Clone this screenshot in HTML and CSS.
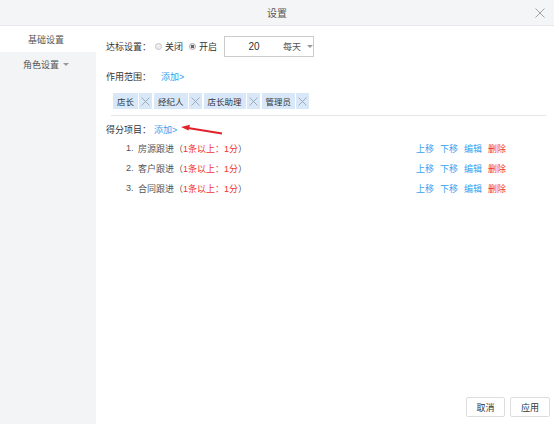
FILE: index.html
```html
<!DOCTYPE html>
<html>
<head>
<meta charset="utf-8">
<link rel="stylesheet" href="styles.css">
</head>
<body>
<div class="dialog">
  <div class="header">
    <span class="title">设置</span>
    <svg class="close" width="10" height="10" viewBox="0 0 10 10"><path d="M0.5 0.5L9.5 9.5M9.5 0.5L0.5 9.5" stroke="#9a9a9a" stroke-width="0.9" fill="none"/></svg>
  </div>
  <div class="main">
    <div class="sidebar">
      <div class="nav-item active">基础设置</div>
      <div class="nav-item">角色设置 <span class="caret"></span></div>
    </div>
    <div class="content">
      <div class="row row-target">
        <span class="label">达标设置：</span>
        <span class="radio"></span><span class="radio-text">关闭</span>
        <span class="radio checked"></span><span class="radio-text">开启</span>
        <div class="combo">
          <span class="combo-num">20</span>
          <span class="combo-sel">每天</span>
          <span class="caret"></span>
        </div>
      </div>
      <div class="row row-scope">
        <span class="label">作用范围：</span>
        <a class="link">添加&gt;</a>
      </div>
      <div class="tags">
        <span class="tag">店长</span><span class="tag-x"><svg width="9" height="9" viewBox="0 0 9 9"><path d="M0.5 0.5L8.5 8.5M8.5 0.5L0.5 8.5" stroke="#8f9aa8" stroke-width="0.8" fill="none"/></svg></span>
        <span class="tag">经纪人</span><span class="tag-x"><svg width="9" height="9" viewBox="0 0 9 9"><path d="M0.5 0.5L8.5 8.5M8.5 0.5L0.5 8.5" stroke="#8f9aa8" stroke-width="0.8" fill="none"/></svg></span>
        <span class="tag">店长助理</span><span class="tag-x"><svg width="9" height="9" viewBox="0 0 9 9"><path d="M0.5 0.5L8.5 8.5M8.5 0.5L0.5 8.5" stroke="#8f9aa8" stroke-width="0.8" fill="none"/></svg></span>
        <span class="tag">管理员</span><span class="tag-x"><svg width="9" height="9" viewBox="0 0 9 9"><path d="M0.5 0.5L8.5 8.5M8.5 0.5L0.5 8.5" stroke="#8f9aa8" stroke-width="0.8" fill="none"/></svg></span>
      </div>
      <div class="divider"></div>
      <div class="row row-score">
        <span class="label">得分项目：</span>
        <a class="link">添加&gt;</a>
        <svg class="arrow" width="44" height="12" viewBox="0 0 44 12"><path d="M42 9.5L8 4" stroke="#e0222a" stroke-width="2" fill="none"/><path d="M1 3L10 0.8L8.6 6.6Z" fill="#e0222a"/></svg>
      </div>
      <ul class="items">
        <li class="item">
          <span class="idx">1.</span>
          <span class="name">房源跟进（<em>1条以上：1分</em>）</span>
          <span class="actions"><a class="link">上移</a><a class="link">下移</a><a class="link">编辑</a><a class="del">删除</a></span>
        </li>
        <li class="item">
          <span class="idx">2.</span>
          <span class="name">客户跟进（<em>1条以上：1分</em>）</span>
          <span class="actions"><a class="link">上移</a><a class="link">下移</a><a class="link">编辑</a><a class="del">删除</a></span>
        </li>
        <li class="item">
          <span class="idx">3.</span>
          <span class="name">合同跟进（<em>1条以上：1分</em>）</span>
          <span class="actions"><a class="link">上移</a><a class="link">下移</a><a class="link">编辑</a><a class="del">删除</a></span>
        </li>
      </ul>
      <div class="footer">
        <button class="btn">取消</button>
        <button class="btn">应用</button>
      </div>
    </div>
  </div>
</div>
</body>
</html>
```
FILE: styles.css
```css
* { box-sizing: border-box; }
html, body { margin: 0; padding: 0; }
body {
  width: 554px;
  height: 424px;
  background: #fff;
  font-family: "Liberation Sans", "Noto Sans CJK SC", sans-serif;
  font-size: 9px;
  color: #333;
  overflow: hidden;
}
.dialog { display: flex; flex-direction: column; height: 424px; }
.header {
  height: 26px;
  background: #f4f5f7;
  border-bottom: 1px solid #e6e8eb;
  display: flex;
  align-items: center;
  justify-content: center;
  position: relative;
  flex: none;
}
.title { font-size: 10px; color: #555; }
.close { position: absolute; right: 9px; top: 8px; }
.main { flex: 1; display: flex; }
.sidebar { width: 96px; background: #f3f4f6; flex: none; }
.nav-item {
  height: 26px;
  display: flex;
  align-items: center;
  justify-content: center;
  color: #555;
  padding-right: 4px;
}
.nav-item.active { background: #fff; margin-bottom: -1px; }
.nav-item .caret { margin-left: 4px; margin-top: 1px; }
.caret {
  display: inline-block;
  width: 0; height: 0;
  border-left: 3px solid transparent;
  border-right: 3px solid transparent;
  border-top: 3px solid #999;
}
.content {
  flex: 1;
  display: flex;
  flex-direction: column;
  padding: 10px 4px 7px 10px;
}
.row { display: flex; align-items: center; }
.row-target { height: 21px; }
.label { color: #333; }
.radio {
  width: 7px; height: 7px;
  border-radius: 50%;
  border: 1px solid #c4c4c4;
  background: #eee;
  margin: 0 3px 0 4px;
}
.radio.checked { background: radial-gradient(circle, #666 0 1.6px, #e8e8e8 2px); border-color: #aaa; }
.radio-text { margin-right: 2px; }
.combo {
  margin-left: 5px;
  width: 90px;
  height: 21px;
  border: 1px solid #ccc;
  display: flex;
  align-items: center;
}
.combo-num { width: 58px; text-align: center; font-size: 10px; color: #333; }
.combo-sel { color: #555; margin-right: 6px; }
.row-scope { height: 20px; margin-top: 9px; }
.row-scope .link { margin-left: 10px; }
.link { color: #3aa0f0; text-decoration: none; }
.del { color: #f03333; }
.tags { display: flex; margin-top: 7px; padding-left: 7px; height: 16px; }
.tag {
  background: #d9e8f9;
  color: #333;
  padding: 0 4px;
  display: flex;
  align-items: center;
  font-size: 8.5px;
}
.tag-x {
  background: #d9e8f9;
  width: 13px;
  margin: 0 2px 0 1px;
  display: flex;
  align-items: center;
  justify-content: center;
}
.divider { height: 1px; background: #e4e6e9; margin: 6px 4px 0 5px; }
.row-score { height: 14px; margin-top: 6px; position: relative; }
.row-score .link { margin-left: 3px; }
.arrow { position: absolute; left: 74px; top: 2px; }
.items { list-style: none; margin: 2px 0 0 0; padding: 0 44px 0 20px; }
.item { display: flex; align-items: center; height: 20px; color: #555; }
.idx { width: 12px; }
.name em { font-style: normal; color: #f03333; }
.actions { margin-left: auto; display: flex; gap: 6px; }
.footer { margin-top: auto; display: flex; justify-content: flex-end; gap: 5px; }
.btn {
  font-family: inherit;
  font-size: 9px;
  color: #333;
  background: #fff;
  border: 1px solid #ddd;
  border-radius: 2px;
  height: 20px;
  width: 39px;
  padding: 0;
}
.footer .btn:last-child { width: 40px; }
```
